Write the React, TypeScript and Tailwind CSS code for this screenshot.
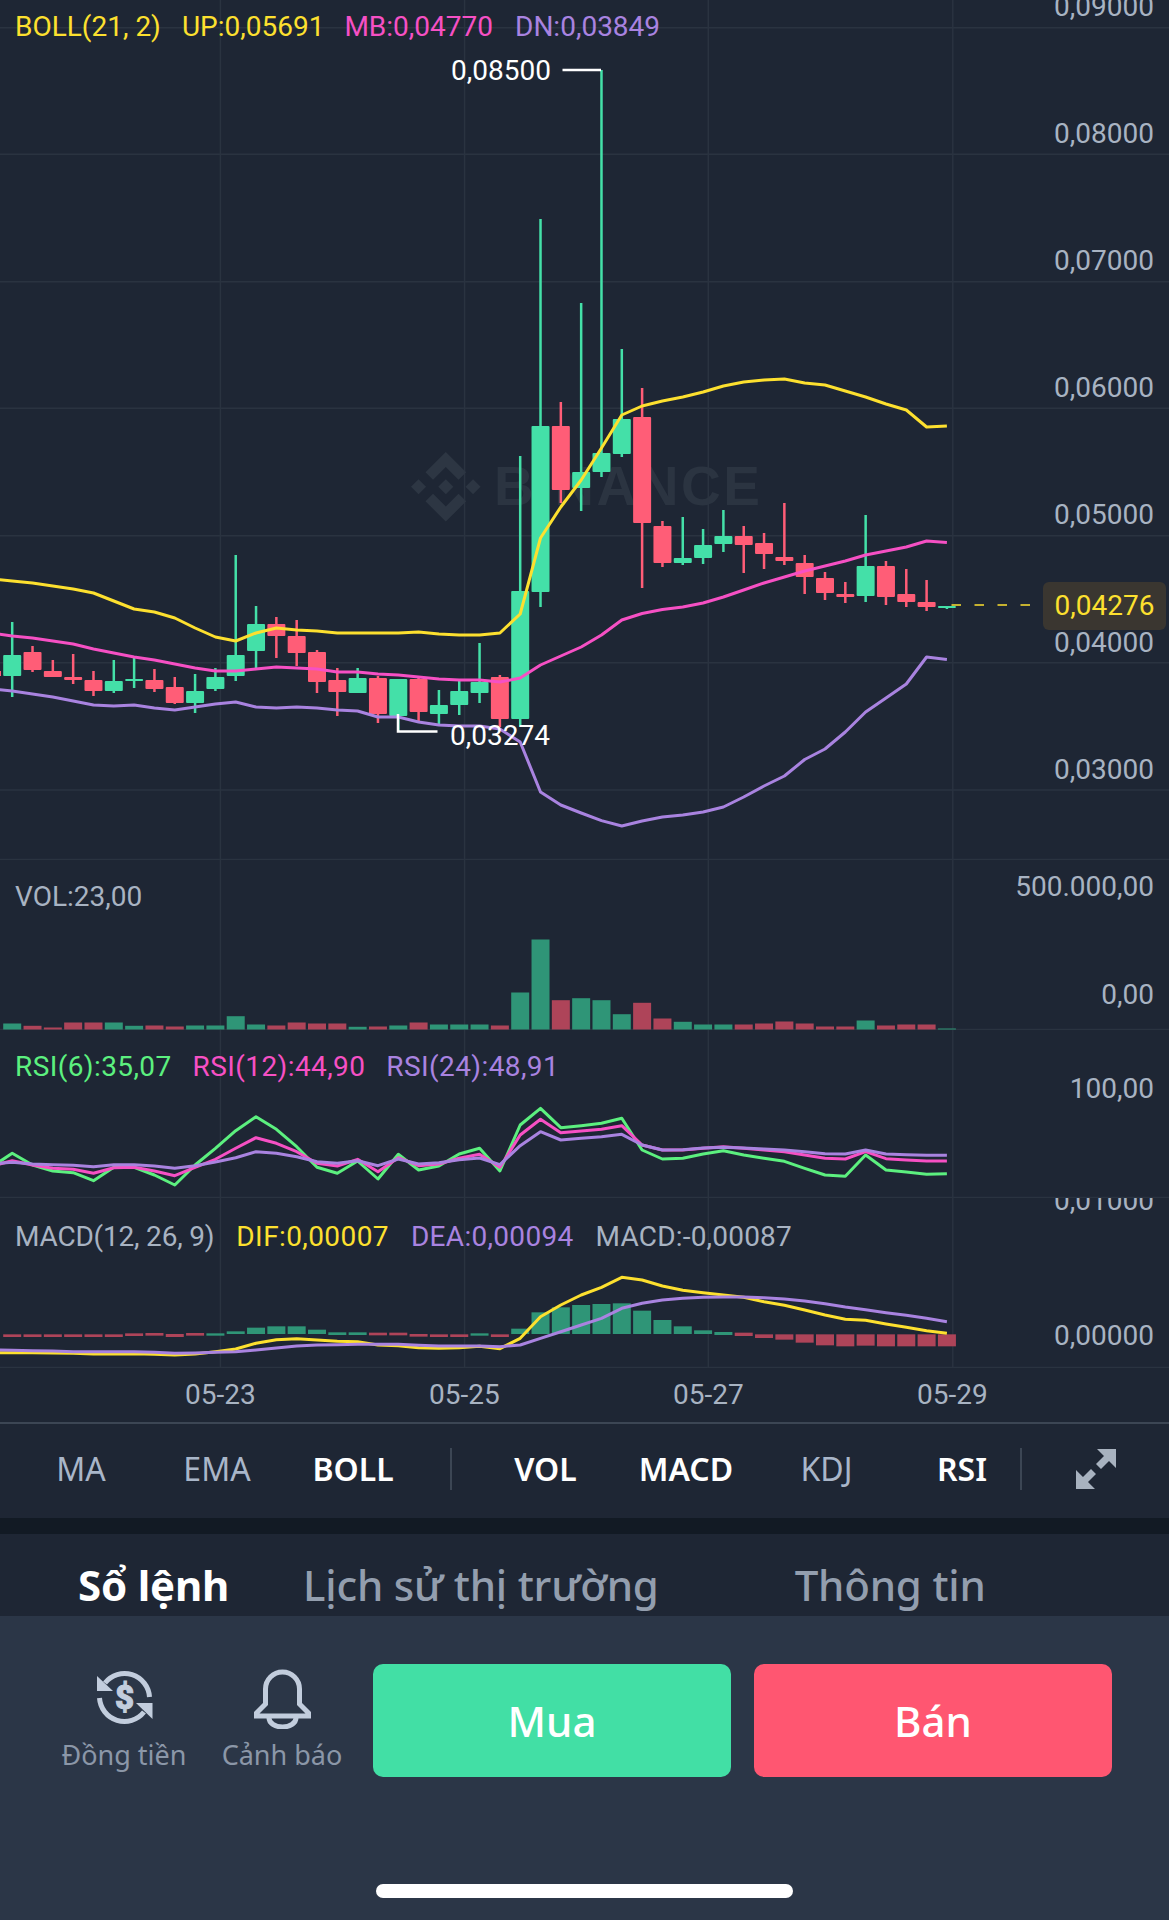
const GREEN = "#44e0a8";
const RED = "#ff5d77";
const VOL_GREEN = "#2f9577";
const VOL_RED = "#ae4459";
const YELLOW = "#fde02f";
const PINK = "#f650c4";
const PURPLE = "#a983e0";
const RSI_GREEN = "#5cf07f";
const GRID = "#2a3340";

const X = (i: number) => 12.2 + 20.32 * i;

// wick top, body top, body bottom, wick bottom, up?
const candles: [number, number, number, number, boolean][] = [
  [622, 655, 676, 697, true],
  [646, 652, 670, 672, false],
  [660, 671, 677, 677, false],
  [654, 677, 680, 684, false],
  [671, 680, 691, 696, false],
  [660, 681, 691, 693, true],
  [658, 679, 681, 688, true],
  [669, 680, 689, 692, false],
  [677, 687, 703, 704, false],
  [674, 691, 703, 713, true],
  [668, 677, 689, 691, true],
  [555, 655, 676, 681, true],
  [606, 624, 651, 668, true],
  [617, 624, 636, 658, false],
  [620, 636, 653, 666, false],
  [650, 652, 682, 693, false],
  [668, 680, 692, 716, false],
  [668, 678, 693, 693, true],
  [676, 678, 714, 723, false],
  [679, 679, 716, 732, true],
  [677, 679, 712, 721, false],
  [690, 705, 714, 725, true],
  [681, 691, 705, 715, true],
  [643, 682, 693, 703, true],
  [675, 677, 719, 727, false],
  [456, 591, 719, 727, true],
  [219, 426, 592, 607, true],
  [402, 426, 490, 503, false],
  [303, 472, 488, 511, true],
  [70, 453, 472, 477, true],
  [349, 419, 454, 457, true],
  [388, 417, 523, 588, false],
  [521, 526, 563, 567, false],
  [517, 558, 563, 565, true],
  [529, 545, 558, 564, true],
  [510, 536, 544, 552, true],
  [526, 536, 545, 573, false],
  [533, 543, 554, 569, false],
  [503, 557, 561, 565, false],
  [555, 563, 577, 594, false],
  [572, 578, 593, 600, false],
  [582, 594, 597, 603, false],
  [515, 566, 596, 602, true],
  [561, 566, 597, 605, false],
  [569, 594, 602, 607, false],
  [580, 602, 607, 611, false],
  [606, 606, 608, 609, true],
];

// the line series start one candle left of the screen edge
const bollUp = [579, 581, 583, 586, 589, 593, 601, 609, 612, 618, 628, 637, 641, 633, 628, 630, 631, 633, 633, 633, 633, 632, 634, 635, 635, 633, 614, 538, 507, 480, 448, 415, 406, 401, 397, 392, 386, 382, 380, 379, 383, 385, 391, 397, 404, 410, 427, 426];
const bollMb = [633, 636, 638, 641, 644, 649, 653, 657, 660, 664, 668, 671, 671, 669, 667, 668, 669, 672, 672, 674, 675, 677, 679, 680, 680, 682, 678, 665, 656, 647, 635, 620, 613.5, 609.5, 607, 603, 597, 590, 583, 577, 571, 566, 561, 555, 551, 547, 541, 542.5];
const bollDn = [689, 691, 694, 697, 701, 705, 706, 705, 708, 710, 707, 704, 702, 707, 708, 707, 708, 710, 711, 717, 717, 722, 725, 726, 726, 729, 742, 792, 805, 813, 820.6, 826, 821, 817, 815, 812, 807, 797, 786, 776, 759.5, 749, 732, 712, 698, 684, 657, 659.5];

const vol = [6, 3.7, 2, 7, 7, 7, 3.7, 4, 3, 4, 4, 13.3, 5, 4, 7, 6, 6, 2.7, 3, 4, 7, 5, 5, 5, 4, 37, 90, 29.3, 31.3, 29.3, 15.3, 26.7, 11, 7.7, 5, 5, 5, 6, 8, 6, 3, 3, 9, 4, 5, 5, 1];

// lower panes: values in thirds of a pixel below y=860
const rsi6 = [920, 880, 915, 933, 938, 962, 922, 922, 945, 975, 915, 865, 812, 770, 808, 860, 922, 940, 903, 957, 883, 930, 918, 882, 865, 933, 795, 745, 803, 797, 790, 775, 870, 897, 895, 882, 872, 885, 895, 904, 925, 945, 949, 885, 930, 936, 943, 941];
const rsi12 = [918, 902, 915, 925, 928, 940, 923, 922, 933, 947, 922, 898, 865, 833, 850, 875, 910, 918, 898, 935, 893, 917, 912, 895, 883, 922, 825, 778, 818, 813, 808, 797, 855, 870, 870, 865, 860, 865, 870, 875, 885, 895, 897, 875, 896, 900, 903, 903];
const rsi24 = [912, 907, 912, 914, 916, 920, 914, 914, 918, 925, 917, 906, 893, 875, 880, 890, 905, 910, 902, 917, 897, 912, 908, 899, 894, 914, 857, 815, 840, 835, 830, 823, 855, 870, 869, 864, 862, 864, 867, 870, 875, 881, 882, 870, 882, 884, 886, 886];
const dif = [1478, 1478, 1478, 1479, 1480, 1482, 1482, 1481, 1483, 1485, 1482, 1475, 1467, 1450, 1439, 1436, 1440, 1444, 1445, 1455, 1457, 1463, 1465, 1463, 1459, 1466, 1435, 1370, 1335, 1305, 1282, 1252, 1260, 1278, 1291, 1298, 1305, 1312, 1325, 1336, 1350, 1365, 1378, 1381, 1392, 1402, 1412, 1420];
const dea = [1470, 1471, 1472, 1473, 1475, 1475, 1475, 1475, 1477, 1480, 1479, 1477, 1475, 1470, 1464, 1458, 1455, 1454, 1453, 1453, 1453, 1456, 1458, 1458, 1458, 1460, 1455, 1435, 1415, 1395, 1375, 1345, 1330, 1320, 1315, 1312, 1311, 1311, 1313, 1317, 1323, 1331, 1341, 1349, 1358, 1366, 1375, 1385];
const macdBars: [number, number, boolean][] = [
  [1423, 1431, false], [1423, 1431, false], [1423, 1431, false], [1423, 1431, false], [1423, 1431, false],
  [1423, 1431, false], [1420, 1428, false], [1419, 1427, false], [1422, 1431, false], [1419, 1427, false],
  [1420, 1427, true], [1414, 1422, true], [1403, 1422, true], [1399, 1422, true], [1399, 1422, true],
  [1409, 1422, true], [1417, 1425, true], [1417, 1425, true], [1418, 1426, false], [1418, 1426, false],
  [1422, 1430, false], [1423, 1431, false], [1423, 1431, false], [1420, 1427, true], [1423, 1431, false],
  [1406, 1422, true], [1357, 1422, true], [1342, 1422, true], [1335, 1422, true], [1332, 1422, true],
  [1330, 1422, true], [1352, 1422, true], [1380, 1422, true], [1399, 1422, true], [1411, 1422, true],
  [1416, 1425, true], [1418, 1428, false], [1423, 1434, false], [1423, 1439, false], [1423, 1448, false],
  [1423, 1456, false], [1423, 1459, false], [1423, 1457, false], [1423, 1459, false], [1423, 1459, false],
  [1423, 1459, false], [1423, 1459, false],
];

const third = (v: number) => 860 + v / 3;
const points = (ys: number[], map: (v: number) => number = (v) => v) =>
  ys.map((y, i) => `${X(i - 1).toFixed(1)},${map(y).toFixed(1)}`).join(" ");

function Series({ ys, color, map }: { ys: number[]; color: string; map?: (v: number) => number }) {
  return <polyline points={points(ys, map)} fill="none" stroke={color} strokeWidth={3} strokeLinejoin="round" />;
}

function Grid({ rows, y1, y2 }: { rows: number[]; y1: number; y2: number }) {
  return (
    <g stroke={GRID} strokeWidth={1.5}>
      {rows.map((y) => (
        <line key={y} x1={0} x2={1169} y1={y} y2={y} />
      ))}
      {[220.4, 464.6, 708.3, 952.8].map((x) => (
        <line key={x} x1={x} x2={x} y1={y1} y2={y2} />
      ))}
    </g>
  );
}

function MainChart() {
  return (
    <svg className="absolute inset-0" width={1169} height={860} viewBox="0 0 1169 860">
      <Grid rows={[27.7, 154.3, 281.7, 408.3, 535.8, 662.8, 790, 859.5]} y1={0} y2={860} />
      <g fill="#2d3643" transform="translate(411 452) scale(2.9)">
        <path d="M12 0L19 7L16.4 9.6L12 5.2L7.6 9.6L5 7Z" />
        <path d="M12 24L5 17L7.6 14.4L12 18.8L16.4 14.4L19 17Z" />
        <path d="M2.6 9.4L5.2 12L2.6 14.6L0 12Z" />
        <path d="M21.4 9.4L24 12L21.4 14.6L18.8 12Z" />
        <path d="M12 9.4L14.6 12L12 14.6L9.4 12Z" />
      </g>
      <text x={494} y={505} fill="#2b3441" fontFamily="Liberation Sans" fontWeight={700} fontSize={55} textLength={266}>
        BINANCE
      </text>
      {candles.map(([wt, bt, bb, wb, up], i) => (
        <g key={i} fill={up ? GREEN : RED}>
          <rect x={X(i) - 1.25} y={wt} width={2.5} height={wb - wt} />
          <rect x={X(i) - 9} y={bt} width={18} height={Math.max(bb - bt, 2)} rx={1} />
        </g>
      ))}
      <rect x={-8} y={671} width={9} height={5} fill={RED} />
      <Series ys={bollUp} color={YELLOW} />
      <Series ys={bollMb} color={PINK} />
      <Series ys={bollDn} color={PURPLE} />
      <path d="M562.5 70H601" stroke="#fff" strokeWidth={2.5} fill="none" />
      <path d="M398 714V731.5H437.5" stroke="#fff" strokeWidth={2.5} fill="none" />
      <line x1={951.5} x2={1043} y1={605} y2={605} stroke={YELLOW} strokeWidth={1.5} strokeDasharray="9.5 13.5" />
    </svg>
  );
}

function VolumeChart() {
  return (
    <svg className="absolute inset-0" width={1169} height={170} viewBox="0 860 1169 170">
      <Grid rows={[1029.5]} y1={860} y2={1030} />
      {vol.map((h, i) => (
        <rect key={i} x={X(i) - 9} y={1029.5 - h} width={18} height={h} fill={candles[i][4] ? VOL_GREEN : VOL_RED} />
      ))}
    </svg>
  );
}

function RsiChart() {
  return (
    <svg className="absolute inset-0" width={1169} height={168} viewBox="0 1030 1169 168">
      <Grid rows={[1197.5]} y1={1030} y2={1198} />
      <Series ys={rsi6} color={RSI_GREEN} map={third} />
      <Series ys={rsi12} color={PINK} map={third} />
      <Series ys={rsi24} color={PURPLE} map={third} />
    </svg>
  );
}

function MacdChart() {
  return (
    <svg className="absolute inset-0" width={1169} height={170} viewBox="0 1198 1169 170">
      <Grid rows={[1367.5]} y1={1198} y2={1368} />
      {macdBars.map(([t, b, up], i) => (
        <rect key={i} x={X(i) - 9} y={third(t)} width={18} height={(b - t) / 3} fill={up ? VOL_GREEN : VOL_RED} />
      ))}
      <Series ys={dif} color={YELLOW} map={third} />
      <Series ys={dea} color={PURPLE} map={third} />
    </svg>
  );
}

function DollarIcon() {
  return (
    <svg width={57} height={57} viewBox="0 0 57 57" fill="none">
      <path d="M9 14A25 25 0 0 1 53.5 28" stroke="#c2cddd" strokeWidth={5} />
      <path d="M3.5 29A25 25 0 0 0 48 43" stroke="#c2cddd" strokeWidth={5} />
      <path d="M1 7V22H17Z" fill="#c2cddd" />
      <path d="M56.5 50V34H40Z" fill="#c2cddd" />
      <text x={28.5} y={40} textAnchor="middle" fill="#c2cddd" stroke="#c2cddd" strokeWidth={1} fontFamily="Roboto" fontWeight={900} fontSize={33}>
        $
      </text>
    </svg>
  );
}

function BellIcon() {
  return (
    <svg width={57} height={60} viewBox="0 0 57 60" fill="none" stroke="#c2cddd" strokeWidth={5}>
      <path d="M11.5 20a17 17 0 0 1 34 0V35L54.5 44V47H2.5V44L11.5 35Z" />
      <path d="M15 49a13.5 9 0 0 0 27 0" />
    </svg>
  );
}

function ExpandIcon() {
  return (
    <svg width={40} height={40} viewBox="0 0 40 40" fill="#a8b2bf">
      <path d="M21 0H40V19L33 12L25 20L20 15L28 7Z" />
      <path d="M0 21V40H19L12 33L20 25L15 20L7 28Z" />
    </svg>
  );
}

export default function App() {
  return (
    <div className="flex h-[1920px] w-[1169px] flex-col overflow-hidden bg-[#1e2634] font-[Roboto,sans-serif] text-[28px] leading-none text-[#a8b3c2]">
      <div className="relative h-[860px] shrink-0">
        <MainChart />
        <div className="relative flex pl-[15px] pt-[13px] text-[#fde02f]">
          <span>BOLL(21, 2)</span>
          <span className="ml-[21px]">UP:0,05691</span>
          <span className="ml-[20px] text-[#f650c4]">MB:0,04770</span>
          <span className="ml-[22px] text-[#a983e0]">DN:0,03849</span>
        </div>
        <span className="absolute left-[451px] top-[57px] text-white">0,08500</span>
        <span className="absolute left-[450px] top-[722px] text-white">0,03274</span>
        <span className="absolute right-[15px] top-[-7px]">0,09000</span>
        <span className="absolute right-[15px] top-[120px]">0,08000</span>
        <span className="absolute right-[15px] top-[247px]">0,07000</span>
        <span className="absolute right-[15px] top-[374px]">0,06000</span>
        <span className="absolute right-[15px] top-[501px]">0,05000</span>
        <span className="absolute right-[15px] top-[629px]">0,04000</span>
        <span className="absolute right-[15px] top-[756px]">0,03000</span>
        <span className="absolute left-[1043px] top-[582px] flex h-[48px] w-[123px] items-center justify-center rounded-md bg-[#3a3630] text-[#fde02f]">
          0,04276
        </span>
      </div>

      <div className="relative h-[170px] shrink-0 overflow-hidden">
        <VolumeChart />
        <div className="relative pl-[15px] pt-[23px]">VOL:23,00</div>
        <span className="absolute right-[15px] top-[13px]">500.000,00</span>
        <span className="absolute right-[15px] top-[121px]">0,00</span>
      </div>

      <div className="relative h-[168px] shrink-0 overflow-hidden">
        <RsiChart />
        <div className="relative flex pl-[15px] pt-[23px] tracking-[0.4px]">
          <span className="text-[#5cf07f]">RSI(6):35,07</span>
          <span className="ml-[21px] text-[#f650c4]">RSI(12):44,90</span>
          <span className="ml-[21px] text-[#a983e0]">RSI(24):48,91</span>
        </div>
        <span className="absolute right-[15px] top-[45px]">100,00</span>
      </div>

      <div className="relative h-[170px] shrink-0 overflow-hidden">
        <MacdChart />
        <div className="relative flex pl-[15px] pt-[25px]">
          <span className="tracking-[-0.2px]">MACD(12, 26, 9)</span>
          <span className="ml-[22px] tracking-[0.4px] text-[#fde02f]">DIF:0,00007</span>
          <span className="ml-[22px] tracking-[0.3px] text-[#a983e0]">DEA:0,00094</span>
          <span className="ml-[22px] tracking-[0.2px]">MACD:-0,00087</span>
        </div>
        <span className="absolute right-[15px] top-[-11px]">0,01000</span>
        <span className="absolute right-[15px] top-[124px]">0,00000</span>
      </div>

      <div className="relative h-[54px] shrink-0">
        <span className="absolute left-[185px] top-[13px]">05-23</span>
        <span className="absolute left-[429px] top-[13px]">05-25</span>
        <span className="absolute left-[673px] top-[13px]">05-27</span>
        <span className="absolute left-[917px] top-[13px]">05-29</span>
      </div>

      <div className="flex h-[96px] shrink-0 items-center border-t-2 border-[#3c4654] pb-[4px] pl-[13px] font-[family-name:'Noto_Sans',sans-serif] text-[32px] text-[#a9b6c9]">
        <span className="w-[136px] text-center">MA</span>
        <span className="w-[136px] text-center">EMA</span>
        <span className="w-[136px] text-center font-semibold text-white">BOLL</span>
        <span className="ml-[29px] h-[42px] w-[2px] bg-[#3c4654]" />
        <span className="ml-[23px] w-[141px] text-center font-semibold text-white">VOL</span>
        <span className="w-[140px] text-center font-semibold text-white">MACD</span>
        <span className="w-[141px] text-center">KDJ</span>
        <span className="ml-[10px] w-[110px] text-center font-semibold text-white">RSI</span>
        <span className="ml-[3px] h-[42px] w-[2px] bg-[#3c4654]" />
        <span className="ml-[54px]">
          <ExpandIcon />
        </span>
      </div>

      <div className="h-[16px] shrink-0 bg-[#121a24]" />

      <div className="flex h-[82px] shrink-0 items-center overflow-hidden pl-[78px] pt-[20px] font-[family-name:'Noto_Sans',sans-serif] text-[42px] font-medium tracking-[-0.2px] text-[#939eae]">
        <span className="font-bold text-white">Sổ lệnh</span>
        <span className="ml-[74px]">Lịch sử thị trường</span>
        <span className="ml-[136px]">Thông tin</span>
      </div>

      <div className="relative flex-1 bg-[#2b3647] font-[family-name:'Noto_Sans',sans-serif]">
        <div className="flex items-start pl-[60px] pt-[48px]">
          <div className="flex w-[128px] flex-col items-center pt-[5px]">
            <DollarIcon />
            <span className="mt-[15px] text-[27px] text-[#8b97a8]">Đồng tiền</span>
          </div>
          <div className="ml-[30px] flex w-[128px] flex-col items-center pt-[5px]">
            <BellIcon />
            <span className="mt-[12px] text-[27px] text-[#8b97a8]">Cảnh báo</span>
          </div>
          <button className="ml-[27px] h-[113px] w-[358px] rounded-[10px] bg-[#42dfa5] text-[42px] font-medium text-white">
            Mua
          </button>
          <button className="ml-[23px] h-[113px] w-[358px] rounded-[10px] bg-[#ff5671] text-[42px] font-medium text-white">
            Bán
          </button>
        </div>
        <div className="absolute bottom-[22px] left-[376px] h-[14px] w-[417px] rounded-full bg-white" />
      </div>
    </div>
  );
}
